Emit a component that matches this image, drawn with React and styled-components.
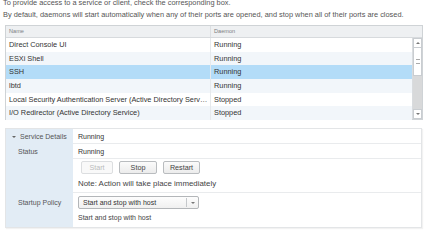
import React from 'react';
import styled, { createGlobalStyle } from 'styled-components';

const GlobalStyle = createGlobalStyle`
  body {
    margin: 0;
    background: #fff;
    font-family: "Liberation Sans", Arial, sans-serif;
    color: #333;
  }
`;

const services = [
  { name: 'Direct Console UI', daemon: 'Running' },
  { name: 'ESXi Shell', daemon: 'Running' },
  { name: 'SSH', daemon: 'Running', selected: true },
  { name: 'lbtd', daemon: 'Running' },
  { name: 'Local Security Authentication Server (Active Directory Service)', daemon: 'Stopped' },
  { name: 'I/O Redirector (Active Directory Service)', daemon: 'Stopped' },
];

const App = () => {
  return (
    <>
      <GlobalStyle />
      <Page>
        <Intro>
          <p>To provide access to a service or client, check the corresponding box.</p>
          <p>
            By default, daemons will start automatically when any of their ports are opened, and
            stop when all of their ports are closed.
          </p>
        </Intro>

        <Table>
          <HeadRow>
            <HeadCell>Name</HeadCell>
            <HeadCell $last>Daemon</HeadCell>
          </HeadRow>
          <Body>
            <Rows>
              {services.map((s, i) => (
                <Row key={s.name} $odd={i % 2 === 1} $selected={s.selected}>
                  <Cell>{s.name}</Cell>
                  <Cell $last>{s.daemon}</Cell>
                </Row>
              ))}
            </Rows>
            <ScrollBar>
              <ScrollBtn>
                <Arrow $up />
              </ScrollBtn>
              <Thumb>
                <Grip />
              </Thumb>
              <Track />
              <ScrollBtn>
                <Arrow />
              </ScrollBtn>
            </ScrollBar>
          </Body>
        </Table>

        <Details>
          <Label $head>
            <Caret />
            Service Details
          </Label>
          <Value $head>Running</Value>

          <Label>Status</Label>
          <Value>Running</Value>

          <Label $tall />
          <Value $tall>
            <Buttons>
              <Button disabled $w={32}>Start</Button>
              <Button $w={38}>Stop</Button>
              <Button $w={37}>Restart</Button>
            </Buttons>
            <Note $wide>Note: Action will take place immediately</Note>
          </Value>

          <Label $tall $last>Startup Policy</Label>
          <Value $tall $last>
            <Select>
              <SelectText>Start and stop with host</SelectText>
              <SelectArrow>
                <Arrow />
              </SelectArrow>
            </Select>
            <Note>Start and stop with host</Note>
          </Value>
        </Details>
      </Page>
    </>
  );
};

export default App;

const Page = styled.div`
  width: 430px;
  height: 244px;
  overflow: hidden;
`;

const Intro = styled.div`
  margin: -3px 0 0 3px;
  p {
    margin: 0;
    font-size: 7.4px;
    line-height: 12px;
    color: #555;
    white-space: nowrap;
  }
`;

const Table = styled.div`
  margin: 4px 7px 0 5px;
  border: 1px solid #cfd3d6;
  box-sizing: border-box;
  height: 95px;
  display: flex;
  flex-direction: column;
`;

const HeadRow = styled.div`
  display: grid;
  grid-template-columns: 205px 1fr;
  height: 11px;
  background: #eef0f2;
  border-bottom: 1px solid #d7dadd;
`;

const HeadCell = styled.div`
  font-size: 5.6px;
  color: #7c7f83;
  line-height: 11px;
  padding-left: 3px;
  border-right: ${(p) => (p.$last ? 'none' : '1px solid #dcdfe2')};
`;

const Body = styled.div`
  flex: 1;
  display: flex;
  min-height: 0;
`;

const Rows = styled.div`
  flex: 1;
  display: flex;
  flex-direction: column;
  min-width: 0;
`;

const Row = styled.div`
  display: grid;
  grid-template-columns: 205px minmax(0, 1fr);
  height: 13.67px;
  background: ${(p) => (p.$selected ? '#b3dcf8' : p.$odd ? '#f2f6fa' : '#fff')};
`;

const Cell = styled.div`
  min-width: 0;
  font-size: 7.35px;
  line-height: 13.67px;
  color: #333;
  padding-left: 3px;
  padding-right: 2px;
  white-space: nowrap;
  overflow: hidden;
  text-overflow: ellipsis;
  border-right: ${(p) => (p.$last ? 'none' : '1px solid #e6e9ec')};
`;

const ScrollBar = styled.div`
  width: 9px;
  display: flex;
  flex-direction: column;
  border-left: 1px solid #d9dcdf;
`;

const ScrollBtn = styled.div`
  height: 10px;
  background: #fff;
  border: 1px solid #c9cdd1;
  box-sizing: border-box;
  display: flex;
  align-items: center;
  justify-content: center;
`;

const Arrow = styled.div`
  width: 0;
  height: 0;
  border-left: 2px solid transparent;
  border-right: 2px solid transparent;
  ${(p) => (p.$up ? 'border-bottom: 2px solid #777;' : 'border-top: 2px solid #777;')}
`;

const Thumb = styled.div`
  height: 28px;
  background: #fff;
  border: 1px solid #c9cdd1;
  border-top: none;
  box-sizing: border-box;
  display: flex;
  align-items: center;
  justify-content: center;
`;

const Grip = styled.div`
  width: 4px;
  height: 3px;
  border-top: 1px solid #aaa;
  border-bottom: 1px solid #aaa;
`;

const Track = styled.div`
  flex: 1;
  background: #d8d9da;
`;

const Details = styled.div`
  margin: 8px 8px 0 5px;
  display: grid;
  grid-template-columns: 67px 1fr;
  border: 1px solid #e3e5e7;
  box-shadow: 1px 1px 1px rgba(0, 0, 0, 0.05);
`;

const Label = styled.div`
  background: #e2ecf5;
  font-size: 7px;
  color: #555;
  padding-left: ${(p) => (p.$head ? '6px' : '12px')};
  height: ${(p) => (p.$tall ? '34px' : '15px')};
  line-height: ${(p) => (p.$tall ? '19px' : '15px')};
  box-sizing: border-box;
  display: flex;
  align-items: ${(p) => (p.$tall ? 'flex-start' : 'center')};
  gap: 4px;
  white-space: nowrap;
`;

const Caret = styled.span`
  width: 0;
  height: 0;
  border-left: 2px solid transparent;
  border-right: 2px solid transparent;
  border-top: 2.5px solid #666;
`;

const Value = styled.div`
  height: ${(p) => (p.$tall ? '34px' : '15px')};
  box-sizing: border-box;
  padding-left: 5px;
  font-size: 7px;
  color: #333;
  display: flex;
  flex-direction: column;
  justify-content: ${(p) => (p.$tall ? 'flex-start' : 'center')};
  border-bottom: ${(p) => (p.$last ? 'none' : '1px solid #e9ebed')};
  padding-top: ${(p) => (p.$tall ? '2px' : '0')};
`;

const Buttons = styled.div`
  display: flex;
  gap: 6px;
  padding-left: 3px;
`;

const Button = styled.button`
  width: ${(p) => p.$w}px;
  height: 13px;
  padding: 0;
  font-family: inherit;
  font-size: 7.2px;
  color: ${(p) => (p.disabled ? '#b9bbbd' : '#444')};
  border: 1px solid ${(p) => (p.disabled ? '#dcdee0' : '#b9bcbf')};
  border-radius: 2px;
  background: ${(p) =>
    p.disabled ? '#f9f9f9' : 'linear-gradient(#fbfbfb, #ececec)'};
`;

const Note = styled.div`
  margin-top: 5px;
  font-size: ${(p) => (p.$wide ? '7.9px' : '7px')};
  color: #444;
  white-space: nowrap;
`;

const Select = styled.div`
  margin-top: 1px;
  width: 121px;
  height: 13px;
  box-sizing: border-box;
  border: 1px solid #b3b6b9;
  border-radius: 2px;
  background: linear-gradient(#fdfdfd, #f0f0f0);
  display: flex;
  align-items: center;
`;

const SelectText = styled.div`
  flex: 1;
  font-size: 7px;
  color: #333;
  padding-left: 4px;
`;

const SelectArrow = styled.div`
  width: 11px;
  height: 9px;
  border-left: 1px solid #c5c8cb;
  display: flex;
  align-items: center;
  justify-content: center;
`;
